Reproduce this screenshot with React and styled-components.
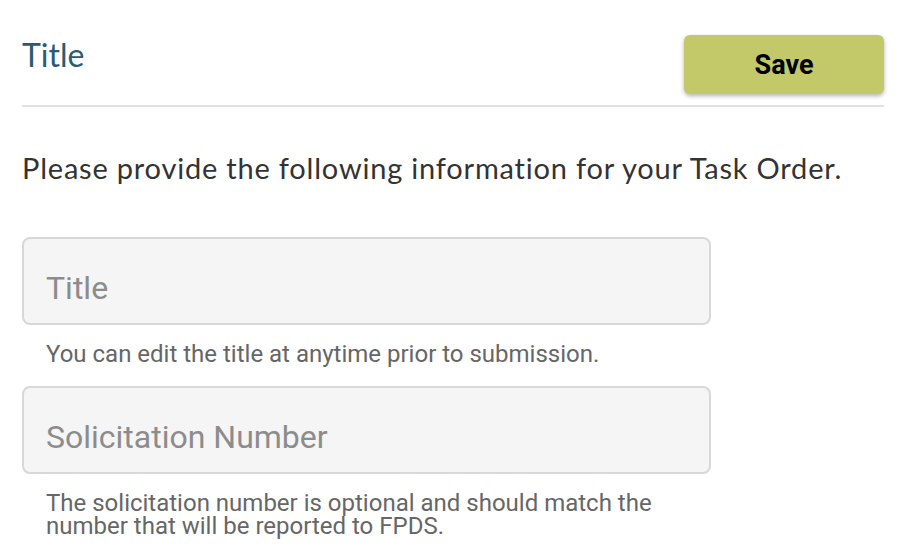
import React from 'react';
import styled, { createGlobalStyle } from 'styled-components';

const GlobalStyle = createGlobalStyle`
	body {
		margin: 0;
		background: #fff;
	}
`;

const App = () => {
	return (
		<Page>
			<GlobalStyle />
			<Header>
				<Heading>Title</Heading>
				<SaveButton type='button'>Save</SaveButton>
			</Header>
			<Intro>Please provide the following information for your Task Order.</Intro>
			<Field>
				<Input placeholder='Title' />
				<Helper>You can edit the title at anytime prior to submission.</Helper>
			</Field>
			<Field>
				<Input placeholder='Solicitation Number' />
				<Helper>
					The solicitation number is optional and should match the number that
					will be reported to FPDS.
				</Helper>
			</Field>
		</Page>
	);
};

const Page = styled.div`
	padding: 0 16px 0 22px;
	width: 862px;
`;

const Header = styled.div`
	display: flex;
	justify-content: space-between;
	align-items: flex-start;
	padding: 35px 0 11px;
	border-bottom: 2px solid #e2e2e2;
`;

const Heading = styled.h1`
	margin: 0;
	font-family: Lato, 'Open Sans', sans-serif;
	font-weight: 400;
	font-size: 32px;
	line-height: 40px;
	color: #2a5b72;
`;

const SaveButton = styled.button`
	width: 200px;
	height: 59px;
	border: none;
	border-radius: 6px;
	background: #c3c869;
	color: #000;
	font-family: Roboto, 'Liberation Sans', sans-serif;
	font-weight: 700;
	font-size: 27px;
	box-shadow: 0 2px 4px rgba(0, 0, 0, 0.3);
	cursor: pointer;
`;

const Intro = styled.p`
	margin: 43px 0 51px;
	font-family: Lato, 'Open Sans', sans-serif;
	font-size: 29px;
	line-height: 36px;
	letter-spacing: 0.8px;
	color: #333;
`;

const Field = styled.div`
	display: flex;
	flex-direction: column;
	width: 689px;
	margin-bottom: 20px;
`;

const Input = styled.input`
	box-sizing: border-box;
	height: 88px;
	padding: 14px 22px 0;
	border: 2px solid #d8d8d8;
	border-radius: 8px;
	background: #f5f5f5;
	font-family: Roboto, 'Liberation Sans', sans-serif;
	font-size: 32px;
	color: #333;
	outline: none;

	&::placeholder {
		color: #8c8c8c;
	}
`;

const Helper = styled.div`
	margin: 18px 0 0 24px;
	max-width: 640px;
	font-family: Roboto, 'Liberation Sans', sans-serif;
	font-size: 24px;
	line-height: 23px;
	color: #666;
`;

export default App;
